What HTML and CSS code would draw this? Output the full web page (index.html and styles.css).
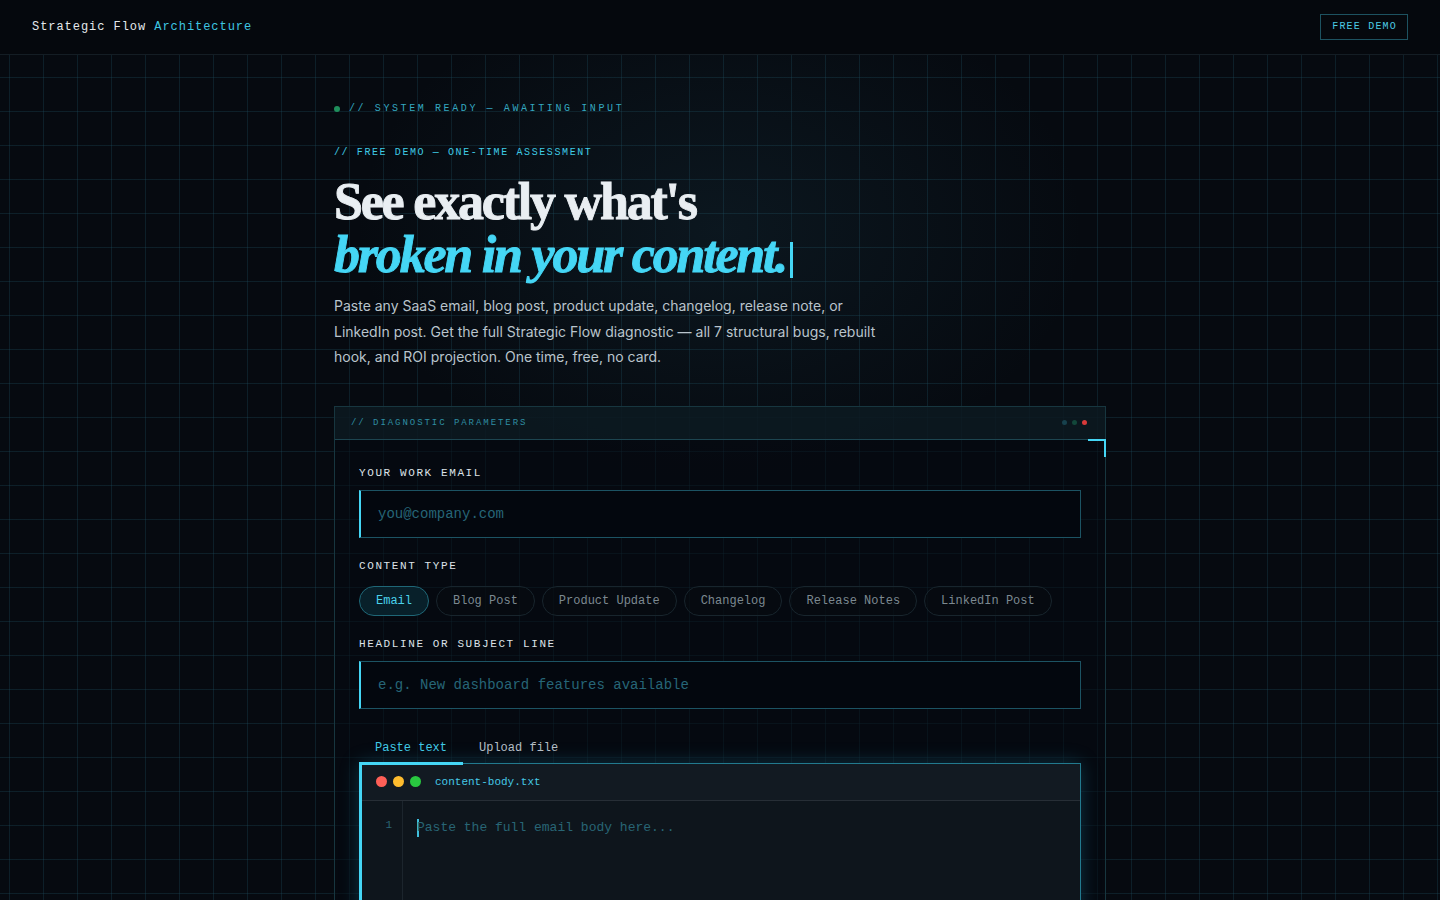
FILE: index.html
```html
<!DOCTYPE html>
<html lang="en">
<head>
<meta charset="utf-8">
<title>Strategic Flow Architecture — Free Demo</title>
<link rel="stylesheet" href="styles.css">
</head>
<body>
<div class="bg-grid"></div>
<header class="topbar">
  <div class="brand">Strategic Flow <span class="brand-accent">Architecture</span></div>
  <a class="btn-demo" href="#">FREE DEMO</a>
</header>
<main class="wrap">
  <div class="status"><span class="status-dot"></span>// SYSTEM READY — AWAITING INPUT</div>
  <div class="eyebrow">// FREE DEMO — ONE-TIME ASSESSMENT</div>
  <h1 class="headline">See exactly what's<br><em>broken in your content.</em><span class="caret"></span></h1>
  <p class="lead">Paste any SaaS email, blog post, product update, changelog, release note, or LinkedIn post. Get the full Strategic Flow diagnostic — all 7 structural bugs, rebuilt hook, and ROI projection. One time, free, no card.</p>

  <section class="panel">
    <div class="panel-head">
      <span class="panel-title">// DIAGNOSTIC PARAMETERS</span>
      <span class="panel-dots"><i class="pd pd-a"></i><i class="pd pd-b"></i><i class="pd pd-c"></i></span>
    </div>
    <span class="corner"></span>
    <div class="panel-body">
      <label class="field-label">YOUR WORK EMAIL</label>
      <div class="input"><span class="ph">you@company.com</span></div>

      <label class="field-label">CONTENT TYPE</label>
      <div class="chips">
        <span class="chip active">Email</span>
        <span class="chip">Blog Post</span>
        <span class="chip">Product Update</span>
        <span class="chip">Changelog</span>
        <span class="chip">Release Notes</span>
        <span class="chip">LinkedIn Post</span>
      </div>

      <label class="field-label">HEADLINE OR SUBJECT LINE</label>
      <div class="input"><span class="ph">e.g. New dashboard features available</span></div>

      <div class="tabs">
        <span class="tab active">Paste text</span>
        <span class="tab">Upload file</span>
      </div>
      <div class="editor">
        <div class="editor-head">
          <span class="dot dot-r"></span><span class="dot dot-y"></span><span class="dot dot-g"></span>
          <span class="fname">content-body.txt</span>
        </div>
        <div class="editor-body">
          <div class="gutter">1</div>
          <div class="code"><span class="tcaret"></span><span class="ph">Paste the full email body here...</span></div>
        </div>
      </div>
    </div>
  </section>
</main>
</body>
</html>
```
FILE: styles.css
```css
* { box-sizing: border-box; }
html, body { margin: 0; padding: 0; }
body {
  background: #060a10;
  color: #d6dde3;
  font-family: "Inter", "Noto Sans", sans-serif;
  min-height: 900px;
  overflow: hidden;
  position: relative;
}
.bg-grid {
  position: absolute;
  inset: 0;
  background-image:
    radial-gradient(ellipse 520px 360px at 720px 230px, rgba(40, 90, 110, 0.16), rgba(0,0,0,0) 70%),
    linear-gradient(to right, rgba(30, 80, 98, 0.3) 1px, transparent 1px),
    linear-gradient(to bottom, rgba(30, 80, 98, 0.3) 1px, transparent 1px);
  background-size: 100% 100%, 34px 34px, 34px 34px;
  background-position: 0 0, 9px 9px, 9px 9px;
  z-index: 0;
}
.topbar {
  position: relative;
  z-index: 2;
  height: 55px;
  background: #05080d;
  border-bottom: 1px solid #141d24;
  display: flex;
  align-items: center;
  justify-content: space-between;
  padding: 0 32px;
}
.brand {
  font-family: "Liberation Mono", "DejaVu Sans Mono", monospace;
  font-size: 12px;
  letter-spacing: 0.95px;
  color: #e4e8ec;
}
.brand-accent { color: #3ec6e2; }
.btn-demo {
  font-family: "Liberation Mono", monospace;
  font-size: 10px;
  letter-spacing: 1.2px;
  color: #4ccbe4;
  text-decoration: none;
  border: 1px solid #1d5260;
  padding: 6px 10px 6px 11px;
  line-height: 12px;
}
.wrap {
  position: relative;
  z-index: 1;
  width: 772px;
  margin: 0 auto;
  padding-top: 47px;
}
.status {
  font-family: "Liberation Mono", monospace;
  font-size: 10px;
  line-height: 14px;
  letter-spacing: 2.6px;
  color: #34a8c0;
  display: flex;
  align-items: center;
}
.status-dot {
  width: 6px; height: 6px; border-radius: 50%;
  background: #1f8f5c;
  margin: 0 9px 0 0;
}
.eyebrow {
  margin-top: 30px;
  font-family: "Liberation Mono", monospace;
  font-size: 10px;
  line-height: 14px;
  letter-spacing: 1.6px;
  color: #3fcbe6;
}
.headline {
  margin: 15px 0 0;
  font-family: "Liberation Serif", "DejaVu Serif", serif;
  font-weight: 700;
  font-size: 52px;
  line-height: 53px;
  letter-spacing: -2.2px;
  color: #e9eef2;
  -webkit-text-stroke: 0.9px #e9eef2;
}
.headline em {
  font-style: italic;
  color: #45d6f5;
  -webkit-text-stroke: 0.9px #45d6f5;
}
.caret {
  display: inline-block;
  width: 3px;
  height: 36px;
  background: #45d6f5;
  margin-left: 4px;
  vertical-align: -6px;
}
.lead {
  margin: 12px 0 0;
  width: 560px;
  font-size: 14px;
  line-height: 25.5px;
  color: #b9c4cc;
}
.panel {
  position: relative;
  margin-top: 36px;
  border: 1px solid #17363f;
  background: rgba(5, 10, 16, 0.55);
}
.panel-head {
  height: 33px;
  display: flex;
  align-items: center;
  justify-content: space-between;
  padding: 0 18px 0 16px;
  background: rgba(14, 30, 37, 0.7);
  border-bottom: 1px solid #1d4550;
}
.panel-title {
  font-family: "Liberation Mono", monospace;
  font-size: 9px;
  letter-spacing: 1.95px;
  color: #2f8ea3;
}
.panel-dots { display: flex; gap: 5px; }
.pd { width: 5px; height: 5px; border-radius: 50%; display: block; }
.pd-a { background: #17414d; }
.pd-b { background: #12473a; }
.pd-c { background: #d83a3a; }
.corner {
  position: absolute;
  right: -1px;
  top: 32px;
  width: 18px;
  height: 18px;
  border-top: 2px solid #45d6f5;
  border-right: 2px solid #45d6f5;
}
.panel-body {
  padding: 26px 24px 0 24px;
}
.field-label {
  display: block;
  font-family: "Liberation Mono", monospace;
  font-size: 11px;
  line-height: 14px;
  letter-spacing: 1.6px;
  color: #dde3e8;
}
.input {
  margin: 10px 0 21px;
  height: 48px;
  background: #03070e;
  border: 1px solid #1c5363;
  border-left: 2px solid #45d6f5;
  display: flex;
  align-items: center;
  padding-left: 17px;
}
.ph {
  font-family: "Liberation Mono", monospace;
  font-size: 14px;
  color: #266577;
}
.chips {
  display: flex;
  gap: 7px;
  margin: 13px 0 21px;
}
.chip {
  font-family: "Liberation Mono", monospace;
  font-size: 12px;
  height: 30px;
  line-height: 28px;
  padding: 0 16px;
  border-radius: 15px;
  border: 1px solid #18252d;
  color: #7c8990;
  background: rgba(6, 11, 17, 0.6);
}
.chip.active {
  border-color: #1f6777;
  background: #08202a;
  color: #4ad2ec;
}
.tabs {
  display: flex;
  margin-top: 26px;
}
.tab {
  font-family: "Liberation Mono", monospace;
  font-size: 12px;
  color: #b4bec5;
  padding: 6px 16px 7px;
}
.tab.active {
  color: #40c9e6;
  border-bottom: 3px solid #45d6f5;
}
.editor {
  border: 1px solid #227a8e;
  border-left: 3px solid #45d6f5;
  background: #0e151c;
  box-shadow: 0 0 18px rgba(40, 170, 210, 0.25);
  margin-top: -2px;
}
.editor-head {
  height: 37px;
  background: #121a22;
  border-bottom: 1px solid #272e36;
  display: flex;
  align-items: center;
  padding-left: 14px;
  gap: 6px;
}
.dot { width: 11px; height: 11px; border-radius: 50%; display: block; }
.dot-r { background: #fe5f57; }
.dot-y { background: #febc2e; }
.dot-g { background: #29c840; }
.fname {
  margin-left: 8px;
  font-family: "Liberation Mono", monospace;
  font-size: 11px;
  color: #45c8e6;
}
.editor-body {
  display: flex;
  height: 220px;
}
.gutter {
  width: 41px;
  border-right: 1px solid #1c252d;
  font-family: "Liberation Mono", monospace;
  font-size: 11px;
  color: #2b6675;
  text-align: right;
  padding: 18px 10px 0 0;
}
.code {
  padding: 18px 0 0 14px;
  display: flex;
  align-items: flex-start;
}
.code .ph { font-size: 13px; color: #286575; line-height: 18px; }
.tcaret {
  width: 2px;
  height: 18px;
  background: #3fbedc;
  display: block;
  margin-right: -2px;
}
```
